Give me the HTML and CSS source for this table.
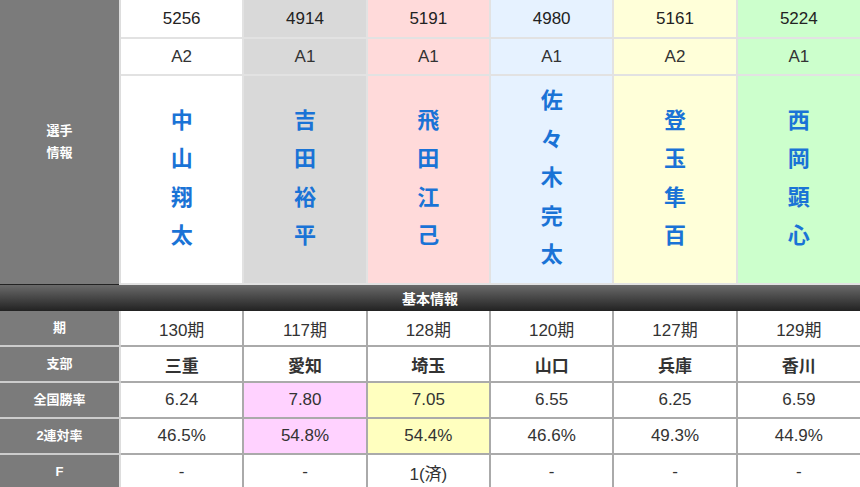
FILE: index.html
```html
<!DOCTYPE html>
<html lang="ja">
<head>
    <meta charset="UTF-8">
    <title>出走表</title>
    <link rel="stylesheet" href="styles.css">
</head>
<body>
    <table class="entry">
        <colgroup>
            <col class="col-label">
            <col><col><col><col><col><col>
        </colgroup>
        <tbody class="racers">
            <tr class="row-num">
                <th class="label" rowspan="3">選手<br>情報</th>
                <td class="w1">5256</td>
                <td class="w2">4914</td>
                <td class="w3">5191</td>
                <td class="w4">4980</td>
                <td class="w5">5161</td>
                <td class="w6">5224</td>
            </tr>
            <tr class="row-class">
                <td class="w1">A2</td>
                <td class="w2">A1</td>
                <td class="w3">A1</td>
                <td class="w4">A1</td>
                <td class="w5">A2</td>
                <td class="w6">A1</td>
            </tr>
            <tr class="row-name">
                <td class="w1"><span class="name">中<br>山<br>翔<br>太</span></td>
                <td class="w2"><span class="name">吉<br>田<br>裕<br>平</span></td>
                <td class="w3"><span class="name">飛<br>田<br>江<br>己</span></td>
                <td class="w4"><span class="name">佐<br>々<br>木<br>完<br>太</span></td>
                <td class="w5"><span class="name">登<br>玉<br>隼<br>百</span></td>
                <td class="w6"><span class="name">西<br>岡<br>顕<br>心</span></td>
            </tr>
        </tbody>
        <tbody class="basic">
            <tr>
                <th class="section" colspan="7">基本情報</th>
            </tr>
            <tr>
                <th class="label">期</th>
                <td>130期</td>
                <td>117期</td>
                <td>128期</td>
                <td>120期</td>
                <td>127期</td>
                <td>129期</td>
            </tr>
            <tr class="bold">
                <th class="label">支部</th>
                <td>三重</td>
                <td>愛知</td>
                <td>埼玉</td>
                <td>山口</td>
                <td>兵庫</td>
                <td>香川</td>
            </tr>
            <tr>
                <th class="label">全国勝率</th>
                <td>6.24</td>
                <td class="top1">7.80</td>
                <td class="top2">7.05</td>
                <td>6.55</td>
                <td>6.25</td>
                <td>6.59</td>
            </tr>
            <tr>
                <th class="label">2連対率</th>
                <td>46.5%</td>
                <td class="top1">54.8%</td>
                <td class="top2">54.4%</td>
                <td>46.6%</td>
                <td>49.3%</td>
                <td>44.9%</td>
            </tr>
            <tr>
                <th class="label">F</th>
                <td>-</td>
                <td>-</td>
                <td>1(済)</td>
                <td>-</td>
                <td>-</td>
                <td>-</td>
            </tr>
        </tbody>
    </table>
</body>
</html>
```

FILE: styles.css
```css
body {
    margin: 0;
    background-color: #fff;
    font-family: "Liberation Sans", Arial, "Noto Sans CJK JP", sans-serif;
}

.entry {
    width: 860px;
    border-collapse: collapse;
    table-layout: fixed;
    color: #222;
}

.col-label {
    width: 120px;
}

.entry td,
.entry th {
    padding: 0;
    text-align: center;
}

.label {
    background-color: #7b7b7b;
    color: #fff;
    font-size: 13px;
    font-weight: bold;
    line-height: 22px;
    border-right: 2px solid #ddd;
}

/* racer rows */
.racers td {
    border: 2px solid #e2e2e2;
    border-top: none;
    font-size: 17px;
}

.racers td:last-child {
    border-right: none;
}

.row-num td {
    height: 37px;
}

.row-class td {
    height: 35px;
    color: #333;
}

.row-name td {
    height: 207px;
    border-bottom: 2px solid #e2e2e2;
}

.name {
    display: inline-block;
    margin-bottom: 8px;
    color: #1a73d6;
    font-size: 22px;
    font-weight: bold;
    line-height: 38.5px;
    font-family: "Noto Sans CJK JP", sans-serif;
}

.w1 { background-color: #ffffff; }
.w2 { background-color: #d9d9d9; }
.w3 { background-color: #ffdada; }
.w4 { background-color: #e6f2ff; }
.w5 { background-color: #ffffd9; }
.w6 { background-color: #ccffcc; }

/* basic info */
.section {
    height: 26px;
    background: linear-gradient(#6a6a6a, #222);
    color: #fff;
    font-size: 14px;
    font-weight: bold;
    font-family: "Noto Sans CJK JP", sans-serif;
}

.basic td {
    height: 34px;
    border: 2px solid #aaa;
    border-top: none;
    font-size: 17px;
    color: #333;
}

.basic td:last-child {
    border-right: none;
}

.basic .label {
    border-bottom: 2px solid #ccc;
}

.bold td {
    font-weight: bold;
}

.top1 { background-color: #ffd2ff; }
.top2 { background-color: #ffffbf; }
```
